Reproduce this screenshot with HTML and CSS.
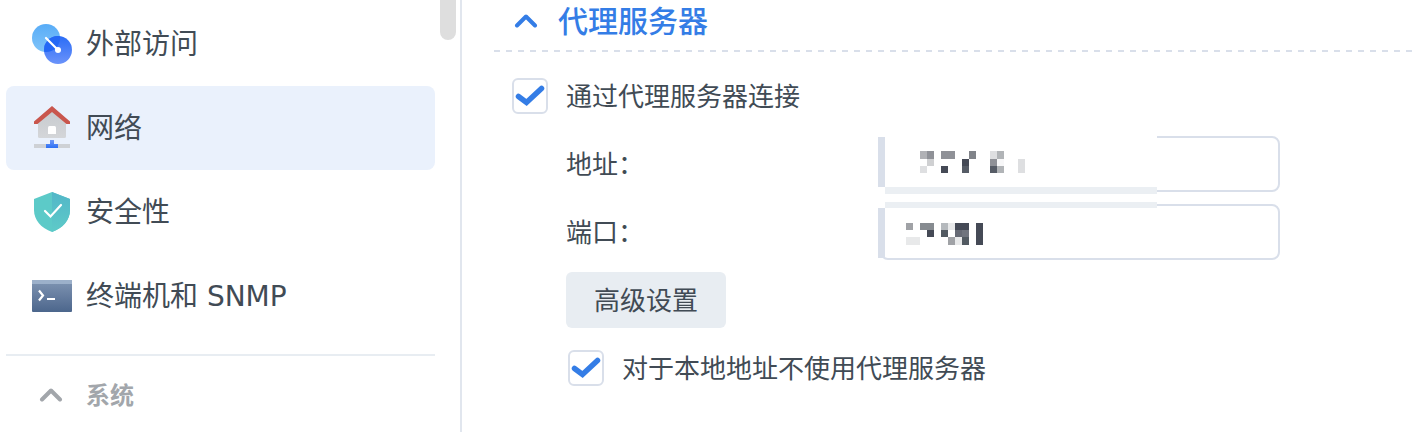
FILE: index.html
```
<!DOCTYPE html>
<html lang="zh-CN">
<head>
<meta charset="utf-8">
<meta name="viewport" content="width=device-width, initial-scale=1">
<title>网络 - 代理服务器</title>
<link rel="stylesheet" href="styles.css">
</head>
<body>
<div class="panel">
  <aside class="sidebar">
    <nav class="nav">
      <a class="nav-item" href="#external">
        <svg class="nav-icon" viewBox="0 0 40 40" aria-hidden="true">
          <defs>
            <linearGradient id="sky" x1="0" y1="0" x2="0" y2="1"><stop offset="0" stop-color="#58acf7"/><stop offset="1" stop-color="#80c4f9"/></linearGradient>
            <linearGradient id="royal" x1="0" y1="0" x2="0" y2="1"><stop offset="0" stop-color="#2a6cf6"/><stop offset="1" stop-color="#6b93fa"/></linearGradient>
            <clipPath id="lens"><circle cx="14" cy="14" r="14"/></clipPath>
          </defs>
          <circle cx="14" cy="14" r="14" fill="url(#sky)"/>
          <circle cx="26" cy="26" r="14" fill="url(#royal)"/>
          <circle cx="26" cy="26" r="14" fill="#2468f5" clip-path="url(#lens)"/>
          <path d="M14 14L26 26" stroke="#fff" stroke-width="2.200" stroke-linecap="round"/>
          <circle cx="26" cy="26" r="3" fill="#fff"/>
        </svg>
        <span>外部访问</span>
      </a>
      <a class="nav-item nav-item-active" href="#network" aria-current="page">
        <svg class="nav-icon" viewBox="0 0 40 40" aria-hidden="true">
          <defs>
            <linearGradient id="wall" x1="0" y1="0" x2="0" y2="1"><stop offset="0" stop-color="#c6cace"/><stop offset="1" stop-color="#d4d6d9"/></linearGradient>
            <linearGradient id="plug" x1="0" y1="0" x2="0" y2="1"><stop offset="0" stop-color="#7299f7"/><stop offset="1" stop-color="#2c70f4"/></linearGradient>
          </defs>
          <path d="M6 14L20 2L34 14V28.500Q34 30 32.500 30H7.500Q6 30 6 28.500Z" fill="url(#wall)"/>
          <path d="M2 16V13.500L20 -2L38 13.500V16H34.500L20 4L5.500 16Z" fill="#c9564d"/>
          <path d="M16 26V19.500Q16 18 17.500 18H22.500Q24 18 24 19.500V26Z" fill="#fff"/>
          <path d="M2 36H38V40H2Z" fill="#ced1d5"/>
          <path d="M18 32H22V36H26V40H14V36H18Z" fill="url(#plug)"/>
        </svg>
        <span>网络</span>
      </a>
      <a class="nav-item" href="#security">
        <svg class="nav-icon" viewBox="0 0 40 40" aria-hidden="true">
          <defs>
            <linearGradient id="shade" x1="0" y1="0" x2="0" y2="1"><stop offset="0" stop-color="#52b6c8"/><stop offset="1" stop-color="#5ecac8"/></linearGradient>
          </defs>
          <path d="M20 0L38 7V18C38 28 31 36 20 40C9 36 2 28 2 18V7Z" fill="#5ccac8"/>
          <path d="M20 0L38 7V18C38 28 31 36 20 40Z" fill="url(#shade)"/>
          <path d="M13 19L18.500 24.500L29 13" fill="none" stroke="#fff" stroke-width="2.200" stroke-linecap="round"/>
        </svg>
        <span>安全性</span>
      </a>
      <a class="nav-item" href="#terminal">
        <svg class="nav-icon" viewBox="0 0 40 40" aria-hidden="true">
          <defs>
            <linearGradient id="screen" x1="0" y1="0" x2="0" y2="1"><stop offset="0" stop-color="#8095b3"/><stop offset="1" stop-color="#4c668c"/></linearGradient>
          </defs>
          <rect y="4" width="40" height="32" rx="1" fill="url(#screen)"/>
          <path d="M0 8V5Q0 4 1 4H39Q40 4 40 5V8Z" fill="#9cb0ca"/>
          <path d="M7 14.500L11 19.500L7 24.500M15 23H23" fill="none" stroke="#fff" stroke-width="2.200"/>
        </svg>
        <span>终端机和 SNMP</span>
      </a>
    </nav>
    <button class="group-toggle" type="button" aria-expanded="true">
      <svg class="chevron" viewBox="0 0 24 16" aria-hidden="true"><path d="M3 11.500L12 2.500L21 11.500"/></svg>
      <span>系统</span>
    </button>
    <div class="scroll-thumb"></div>
  </aside>
  <main class="content">
    <h2 class="section-title">
      <button class="section-toggle" type="button" aria-expanded="true">
        <svg class="chevron" viewBox="0 0 24 16" aria-hidden="true"><path d="M3 11.500L12 2.500L21 11.500"/></svg>
        <span>代理服务器</span>
      </button>
    </h2>
    <form class="form">
      <label class="check-row">
        <span class="check">
          <input class="check-input" type="checkbox" checked>
          <svg class="check-mark" viewBox="0 0 36 36" aria-hidden="true"><path d="M6.500 18.500L14.500 24.500L29.500 10.500"/></svg>
        </span>
        <span class="label-text">通过代理服务器连接</span>
      </label>
      <div class="field">
        <label class="label-text" for="address">地址：</label>
        <div class="field-box">
          <input class="text-input" id="address" type="text">
          <svg class="mask mask-top" viewBox="0 0 279 58" shape-rendering="crispEdges" aria-hidden="true">
            <path d="M0 0H279V58H0Z" fill="#fff"/>
            <path d="M0 1H7V51H0Z" fill="#d9dfea"/>
            <path d="M7 51H279V58H7Z" fill="#ebeff3"/>
            <path d="M42 15h7v8h-7z" fill="#b0b1b5"/>
            <path d="M49 15h7v8h-7zM63 15h14v8h-14zM112 23h7v7h-7z" fill="#8f9197"/>
            <path d="M91 15h7v8h-7z" fill="#808389"/>
            <path d="M112 15h7v8h-7zM42 30h7v7h-7zM140 23h7v14h-7z" fill="#dedfe1"/>
            <path d="M119 15h7v8h-7zM119 30h7v7h-7z" fill="#b1b4b7"/>
            <path d="M49 23h7v7h-7z" fill="#cfd0d2"/>
            <path d="M119 23h7v7h-7z" fill="#f7f7f8"/>
            <path d="M84 23h7v7h-7zM63 30h7v7h-7z" fill="#454a56"/>
            <path d="M84 30h7v7h-7zM112 30h7v7h-7z" fill="#565c66"/>
          </svg>
        </div>
      </div>
      <div class="field">
        <label class="label-text" for="port">端口：</label>
        <div class="field-box">
          <input class="text-input" id="port" type="text">
          <svg class="mask mask-bottom" viewBox="0 0 279 56" shape-rendering="crispEdges" aria-hidden="true">
            <path d="M0 0H279V6H7V56H0Z" fill="#fff"/>
            <path d="M0 6H7V56H0Z" fill="#d9dfea"/>
            <path d="M7 0H279V6H7Z" fill="#ebeff3"/>
            <path d="M28 21h7v7h-7zM70 35h7v8h-7z" fill="#a0a2a6"/>
            <path d="M42 21h14v7h-14z" fill="#868b90"/>
            <path d="M63 21h7v7h-7z" fill="#b5b9bd"/>
            <path d="M70 21h7v7h-7zM28 35h14v8h-14zM77 35h7v8h-7z" fill="#e8e9ea"/>
            <path d="M77 21h14v7h-14zM49 28h7v7h-7zM98 21h7v22h-7z" fill="#454a56"/>
            <path d="M63 28h7v7h-7zM84 35h7v8h-7z" fill="#525a62"/>
            <path d="M77 28h7v7h-7z" fill="#666a75"/>
            <path d="M84 28h7v7h-7z" fill="#70747e"/>
          </svg>
        </div>
      </div>
      <div class="actions">
        <button class="button" type="button">高级设置</button>
      </div>
      <label class="check-row check-row-nested">
        <span class="check">
          <input class="check-input" type="checkbox" checked>
          <svg class="check-mark" viewBox="0 0 36 36" aria-hidden="true"><path d="M6.500 18.500L14.500 24.500L29.500 10.500"/></svg>
        </span>
        <span class="label-text">对于本地地址不使用代理服务器</span>
      </label>
    </form>
  </main>
</div>
</body>
</html>
```
FILE: styles.css
```
* {
  box-sizing: border-box;
}

body {
  margin: 0;
  background: #fff;
  color: #414b55;
  font-family: "DejaVu Sans", "Noto Sans CJK SC", sans-serif;
  font-size: 26px;
  line-height: 36px;
}

button,
input {
  margin: 0;
  color: inherit;
  font: inherit;
}

.panel {
  display: flex;
  min-height: 100vh;
}

.sidebar {
  position: relative;
  flex: 0 0 462px;
  padding: 2px 25px 0 6px;
  border-right: 2px solid #e1e6ee;
}

.nav {
  padding-bottom: 16px;
  border-bottom: 2px solid #e8edf2;
}

.nav-item {
  display: flex;
  align-items: center;
  gap: 14px;
  height: 84px;
  padding: 0 26px;
  border-radius: 8px;
  color: inherit;
  font-size: 28px;
  text-decoration: none;
}

.nav-item span,
.label-text {
  padding-top: 2px;
}

.nav-item-active {
  background: #eaf1fc;
}

.nav-icon {
  flex: none;
  width: 40px;
  height: 40px;
  overflow: visible;
}

.group-toggle,
.section-toggle {
  display: flex;
  align-items: center;
  border: 0;
  background: none;
  font-weight: 500;
}

.group-toggle {
  gap: 23px;
  width: 100%;
  height: 80px;
  padding: 0 33px;
  color: #a2a6ab;
  font-size: 24px;
  font-weight: 700;
}

.chevron {
  flex: none;
  width: 24px;
  height: 16px;
  fill: none;
  stroke: currentColor;
  stroke-width: 4;
  stroke-linecap: round;
  stroke-linejoin: round;
}

.scroll-thumb {
  position: absolute;
  top: 0;
  right: 4px;
  width: 16px;
  height: 40px;
  border-radius: 0 0 8px 8px;
  background: #dedede;
}

.content {
  flex: 1;
  min-width: 0;
  padding-left: 32px;
}

.section-title {
  margin: 0;
  padding-bottom: 8px;
  background: repeating-linear-gradient(to right, #d9dfea 0 6px, transparent 6px 12px) 0 100% / 100% 2px no-repeat;
}

.section-toggle {
  gap: 20px;
  height: 44px;
  padding: 0 20px;
  color: #347de6;
  font-size: 30px;
}

.form {
  display: grid;
  gap: 12px;
  padding: 16px 18px;
}

.check-row {
  display: flex;
  align-items: center;
  gap: 18px;
  height: 56px;
}

.check-row-nested {
  padding-left: 56px;
}

.check {
  position: relative;
  flex: none;
  width: 36px;
  height: 36px;
}

.check-input {
  display: block;
  width: 36px;
  height: 36px;
  border: 2px solid #d9dfea;
  border-radius: 6px;
  background: #fff;
  appearance: none;
}

.check-mark {
  position: absolute;
  inset: 0;
  fill: none;
  stroke: #347de6;
  stroke-width: 5.5;
  stroke-linecap: round;
  pointer-events: none;
}

.check-input:not(:checked) + .check-mark {
  display: none;
}

.field {
  display: grid;
  grid-template-columns: 314px minmax(0, 400px);
  align-items: center;
  padding-left: 54px;
}

.field-box {
  position: relative;
}

.text-input {
  display: block;
  width: 100%;
  height: 56px;
  padding: 0 16px;
  border: 2px solid #d9dfea;
  border-radius: 8px;
  background: #fff;
}

.mask {
  position: absolute;
  left: -2px;
  width: 279px;
  pointer-events: none;
}

.mask-top {
  top: 0;
  height: 58px;
}

.mask-bottom {
  top: -2px;
  height: 56px;
}

.actions {
  padding-left: 54px;
}

.button {
  height: 56px;
  padding: 2px 28px 0;
  border: 0;
  border-radius: 6px;
  background: #e8edf2;
}
```
